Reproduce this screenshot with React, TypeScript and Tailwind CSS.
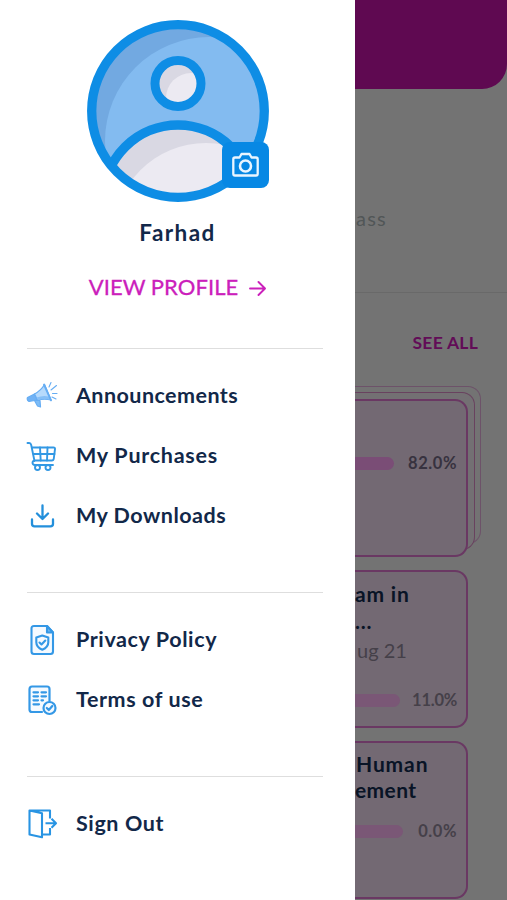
import type { ReactNode } from "react";

function Avatar() {
  return (
    <svg className="block h-[184px] w-[184px]" viewBox="0 0 184 184" fill="none">
      <defs>
        <clipPath id="disc"><circle cx="92" cy="92" r="86" /></clipPath>
        <clipPath id="body"><circle cx="92" cy="180.700" r="72" /></clipPath>
        <clipPath id="head"><circle cx="92" cy="64.500" r="20" /></clipPath>
      </defs>
      <circle cx="92" cy="92" r="86" fill="#72a9e1" />
      <g clipPath="url(#disc)">
        <circle cx="123" cy="122" r="104" fill="#83bbf0" />
        <circle cx="92" cy="180.700" r="72" fill="#d9d8e3" />
        <circle cx="120" cy="216.500" r="92.500" fill="#eceaf2" clipPath="url(#body)" />
        <circle cx="92" cy="180.700" r="74.700" stroke="#0e8de5" strokeWidth="9.500" />
      </g>
      <circle cx="92" cy="92" r="86.300" stroke="#0e8de5" strokeWidth="9.300" />
      <circle cx="92" cy="64.500" r="23" fill="#d9d8e3" />
      <circle cx="105" cy="79" r="25" fill="#eceaf2" clipPath="url(#head)" />
      <circle cx="92" cy="64.500" r="23" stroke="#0e8de5" strokeWidth="9" />
    </svg>
  );
}

function CameraIcon() {
  return (
    <svg className="h-[27px] w-[27px]" viewBox="0 0 27 27" fill="none" stroke="#e9f5ff" strokeWidth="2.300" strokeLinejoin="round">
      <path d="M3 5.500h4.500L9.500 2h8l2 3.500H24q1.700 0 1.700 1.700v14.600q0 1.700-1.700 1.700H3q-1.700 0-1.700-1.700V7.200Q1.300 5.500 3 5.500Z" />
      <circle cx="13.500" cy="14" r="5.500" strokeWidth="2.600" />
    </svg>
  );
}

function MegaphoneIcon() {
  return (
    <svg className="h-[32px] w-[32px]" viewBox="0 0 32 32" fill="none" stroke="#66adf3" strokeWidth="1.200" strokeLinecap="round" strokeLinejoin="round">
      <path d="m8.500 20.500 3 5.500 3 1-.5-6.500Z" fill="#7ebcf6" />
      <path d="m1.500 17.500 7-3.500 3 6-8.500 1.500Q.5 20 1.500 17.500Z" fill="#70b2f5" />
      <path d="M8.500 14Q15 10.500 18.500 4.500L25 20q-6-1.500-13.500 0Z" fill="#b6dafc" />
      <path d="M10.500 17.500q7-2.500 12-1l1.500 3q-6-1-12 .5Z" fill="#85bff7" stroke="none" />
      <path d="m18 4.500 7 15.800" strokeWidth="1.900" />
      <path d="m23 7 2-4.500M25 10l5.500-4.500M26.500 13.500H31M26 17l4 2" strokeWidth="1.100" />
    </svg>
  );
}

function CartIcon() {
  return (
    <svg className="h-[32px] w-[32px]" viewBox="0 0 32 32" fill="none" stroke="#3298e4" strokeWidth="1.900" strokeLinecap="round" strokeLinejoin="round">
      <path d="M1.500 3h1.700q1.500 0 2 2L8.500 21M6.200 7.500h21.300q1.700 0 1.500 1.500l-1.200 9.500q-.2 2-2 2H9q-2.500.2-2.500 2.300T9 25h18" />
      <path d="M7.500 14h21M14 7.500l.7 13M21.500 7.500l-.5 13" />
      <circle cx="11.500" cy="27.500" r="2.500" fill="#fff" />
      <circle cx="22" cy="27.500" r="2.500" fill="#fff" />
    </svg>
  );
}

function DownloadIcon() {
  return (
    <svg className="h-[32px] w-[32px]" viewBox="0 0 32 32" fill="none" stroke="#238fdb" strokeWidth="2.300" strokeLinecap="round" strokeLinejoin="round">
      <path d="M16.500 5.500v13M11 13.500l5.500 5.500 5.500-5.500M6 19.500V24q0 2.300 2.500 2.300h16Q27 26.300 27 24v-4.500" />
    </svg>
  );
}

function PrivacyIcon() {
  return (
    <svg className="h-[32px] w-[32px]" viewBox="0 0 32 32" fill="none" stroke="#3498e6" strokeWidth="2.100" strokeLinecap="round" strokeLinejoin="round">
      <path d="M8 2h13l6 6.500v19q0 2.500-2.500 2.500H8q-2.500 0-2.500-2.500v-23Q5.500 2 8 2Z" fill="#f5faff" />
      <path d="M21 2v6.500h6Z" fill="#70b4ed" />
      <path d="m16.300 11.500 6 2v4.700q0 5-6 7.500-6-2.500-6-7.500v-4.700Z" />
      <path d="m13.500 18.500 2 2 3.800-4" />
    </svg>
  );
}

function TermsIcon() {
  return (
    <svg className="h-[32px] w-[32px]" viewBox="0 0 32 32" fill="none" stroke="#3498e6" strokeWidth="2.200" strokeLinecap="round" strokeLinejoin="round">
      <path d="M16 28H6q-2.500 0-2.500-2.500v-20Q3.500 2.500 6 2.500h15q2.500 0 2.500 2.500v12" fill="#f5faff" />
      <path d="M7.500 8.300H12M15.500 8.300H20M7.500 12.300H12M15.500 12.300H20M7.500 16.300H12M15.500 16.300H17M7.500 20.300H13" />
      <circle cx="23.500" cy="24" r="6" fill="#f5faff" />
      <path d="m20.800 24 2 2 3.500-4" />
    </svg>
  );
}

function SignOutIcon() {
  return (
    <svg className="h-[32px] w-[32px]" viewBox="0 0 32 32" fill="none" stroke="#2894e3" strokeWidth="2.100" strokeLinejoin="round">
      <path d="M24 10.500V2.500H3.500v24l12.500 2.800V5.300L3.500 2.500M16.500 26.500H24V20" />
      <path d="M19.500 15.300h10M25.500 10.800l4.500 4.500-4.500 4.500" />
    </svg>
  );
}

function MenuItem({ icon, label, spacing }: { icon: ReactNode; label: string; spacing: string }) {
  return (
    <button className="flex h-[60px] items-center gap-[18px] text-left">
      {icon}
      <span className={`-mt-[2px] whitespace-nowrap text-[21.500px] font-bold leading-[28px] text-[#122849] ${spacing}`}>{label}</span>
    </button>
  );
}

function Divider() {
  return <div className="mx-[1px] h-px w-[296px] shrink-0 bg-[#dedede]" />;
}

function Progress({ bar, value, spacing, color }: { bar: string; value: string; spacing: string; color: string }) {
  return (
    <div className="flex h-[20px] items-center justify-between pr-[9px]">
      <div className={`h-[13px] rounded-r-full ${bar}`} />
      <span className={`text-[16.500px] font-bold leading-[20px] ${color} ${spacing}`}>{value}</span>
    </div>
  );
}

export default function App() {
  return (
    <div className="flex h-[900px] w-[507px] overflow-hidden bg-[#737373] font-[Lato,sans-serif]">
      <aside className="flex h-full w-[355px] shrink-0 flex-col bg-white px-[26px] pt-[19px]">
        <div className="relative self-center">
          <Avatar />
          <button aria-label="Change photo" className="absolute left-[136px] top-[123px] flex h-[46px] w-[47px] items-center justify-center rounded-[8px] bg-[#0788e4]">
            <CameraIcon />
          </button>
        </div>
        <h1 className="mt-[16px] text-center text-[22.500px] font-bold leading-[28px] tracking-[1.4px] text-[#122849]">Farhad</h1>
        <button className="mt-[26px] flex h-[28px] items-center gap-[11px] self-center text-[#cb20bb]">
          <span className="whitespace-nowrap text-[22px] leading-[28px] tracking-[0.050px] [-webkit-text-stroke:0.3px_#cb20bb]">VIEW PROFILE</span>
          <svg className="h-[17px] w-[17px]" viewBox="0 0 17 17" fill="none" stroke="currentColor" strokeWidth="1.900" strokeLinecap="round" strokeLinejoin="round">
            <path d="M1 9.500h14.500M9.500 3l6.500 6.500L9.500 16" />
          </svg>
        </button>
        <div className="mt-[47px]"><Divider /></div>
        <nav className="mt-[17px] flex flex-col">
          <MenuItem icon={<MegaphoneIcon />} label="Announcements" spacing="tracking-[0.450px]" />
          <MenuItem icon={<CartIcon />} label="My Purchases" spacing="tracking-[0.750px]" />
          <MenuItem icon={<DownloadIcon />} label="My Downloads" spacing="tracking-[0.5px]" />
        </nav>
        <div className="mt-[46px]"><Divider /></div>
        <nav className="mt-[17px] flex flex-col">
          <MenuItem icon={<PrivacyIcon />} label="Privacy Policy" spacing="tracking-[0.6px]" />
          <MenuItem icon={<TermsIcon />} label="Terms of use" spacing="tracking-[0.6px]" />
        </nav>
        <div className="mt-[46px]"><Divider /></div>
        <nav className="mt-[17px] flex flex-col">
          <MenuItem icon={<SignOutIcon />} label="Sign Out" spacing="tracking-[0.6px]" />
        </nav>
      </aside>

      <main className="flex h-full w-[152px] shrink-0 flex-col overflow-hidden">
        <div className="h-[89px] shrink-0 rounded-br-[25px] bg-[#5f0951]" />
        <div className="h-[204px] shrink-0 border-b border-[#696969] pt-[116px]">
          <p className="pl-[1px] text-[20px] leading-[26px] tracking-[1.2px] text-[#515657]">ass</p>
        </div>
        <div className="flex h-[93px] shrink-0 justify-end pr-[29px] pt-[37px]">
          <span className="text-[17.500px] font-bold leading-[26px] tracking-[0.250px] text-[#620c57]">SEE ALL</span>
        </div>
        <div className="relative h-[171px] w-[126px] shrink-0">
          <div className="absolute inset-x-0 top-0 h-[158px] rounded-r-[13px] border border-l-0 border-[#6d5269]" />
          <div className="absolute left-0 top-[6px] h-[158px] w-[120px] rounded-r-[13px] border border-l-0 border-[#69425f] bg-[#737073]" />
          <div className="absolute left-0 top-[13px] h-[158px] w-[113px] rounded-r-[13px] border-2 border-l-0 border-[#6a3863] bg-[#736973] pt-[52px]">
            <Progress bar="w-[39px] bg-[#7a4d76]" value="82.0%" spacing="tracking-[0.550px]" color="text-[#37323f]" />
          </div>
        </div>
        <article className="mt-[13px] h-[158px] w-[113px] shrink-0 rounded-r-[13px] border-2 border-l-0 border-[#6a3863] bg-[#736973] pt-[8px]">
          <div className="h-[53px] text-[21px] font-bold leading-[27px] tracking-[0.8px] text-[#091426]">
            <p>am in</p>
            <p>...</p>
          </div>
          <p className="mt-[4px] whitespace-nowrap pl-[2px] text-[20px] leading-[26px] text-[#454049]">ug 21</p>
          <div className="mt-[27px]"><Progress bar="w-[45px] bg-[#7a5776]" value="11.0%" spacing="tracking-[-0.250px]" color="text-[#454049]" /></div>
        </article>
        <article className="mt-[13px] h-[158px] w-[113px] shrink-0 rounded-r-[13px] border-2 border-l-0 border-[#6a3863] bg-[#736973] pt-[8px]">
          <div className="whitespace-nowrap text-[21px] font-bold leading-[26px] text-[#091426]">
            <p className="ml-[1px] tracking-[0.9px]">Human</p>
            <p className="tracking-[0.4px]">ement</p>
          </div>
          <div className="mt-[18px]"><Progress bar="w-[48px] bg-[#7a5776]" value="0.0%" spacing="tracking-[0.550px]" color="text-[#454049]" /></div>
        </article>
      </main>
    </div>
  );
}
